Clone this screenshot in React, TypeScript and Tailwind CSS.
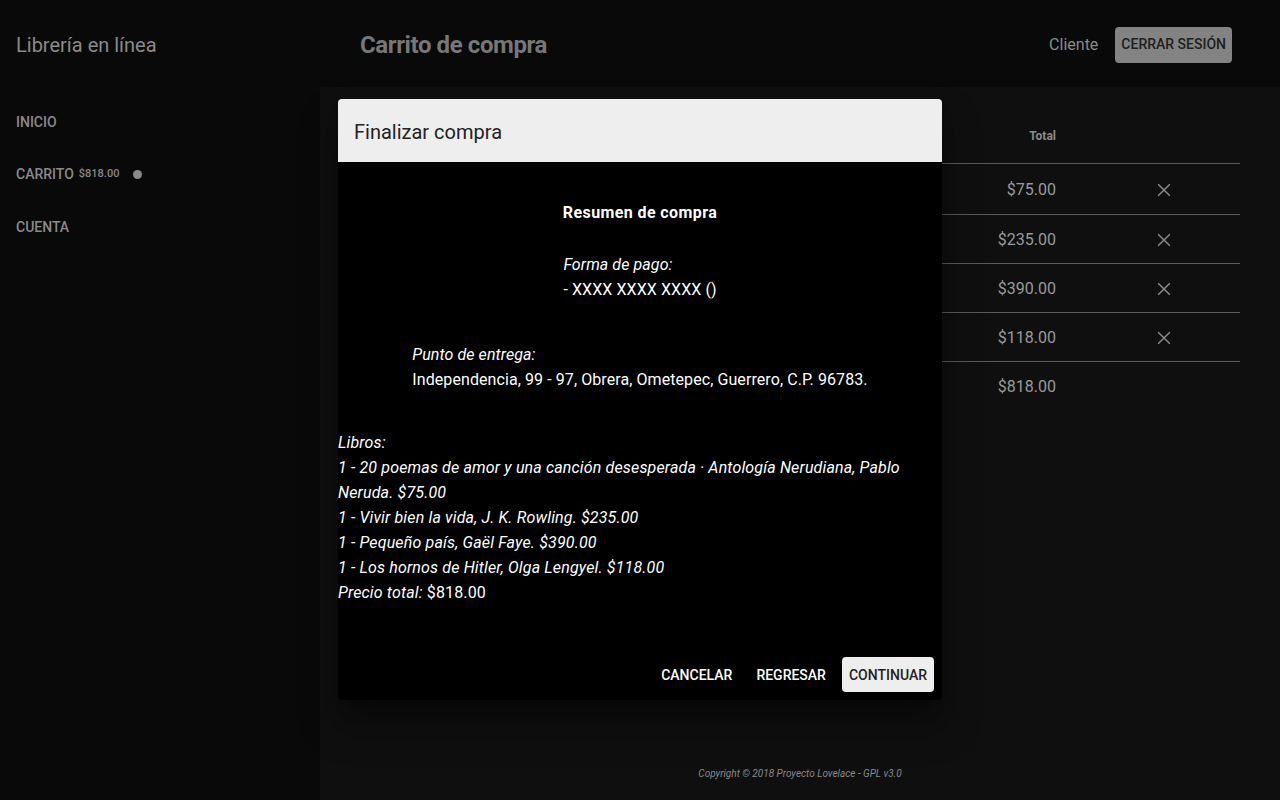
import React from 'react';

const rows = [
  { id: 1, total: '$75.00', h: 'h-[51px]' },
  { id: 2, total: '$235.00', h: 'h-[49px]' },
  { id: 3, total: '$390.00', h: 'h-[49px]' },
  { id: 4, total: '$118.00', h: 'h-[49px]' },
];

const books = [
  '1 - 20 poemas de amor y una canción desesperada · Antología Nerudiana, Pablo Neruda. $75.00',
  '1 - Vivir bien la vida, J. K. Rowling. $235.00',
  '1 - Pequeño país, Gaël Faye. $390.00',
  '1 - Los hornos de Hitler, Olga Lengyel. $118.00',
];

const CloseIcon = () => (
  <svg width="20" height="20" viewBox="0 0 24 24" fill="none" stroke="#8a8a8a" strokeWidth="1.8">
    <path d="M5 5 L19 19 M19 5 L5 19" />
  </svg>
);

const App: React.FC = () => {
  return (
    <div className="relative h-[800px] w-[1280px] overflow-hidden bg-[#0f0f0f] font-['Roboto',sans-serif]">
      <header className="flex h-[87px] items-center bg-[#090909] pt-[2px]">
        <div className="w-[320px] pl-4 text-[20px] text-[#8a8a8a]">Librería en línea</div>
        <h1 className="flex-1 pl-10 text-[24px] font-bold tracking-[-0.4px] text-[#777777]">Carrito de compra</h1>
        <span className="mr-[17px] text-[16px] text-[#8a8a8a]">Cliente</span>
        <button className="mr-12 h-9 rounded bg-[#838383] px-[6px] text-[14px] font-medium uppercase text-[#1e1e1e]">
          Cerrar sesión
        </button>
      </header>

      <div className="flex h-[713px]">
        <nav className="w-[320px] bg-[#090909] pt-[9px] text-[14px] font-medium text-[#8a8a8a]">
          <div className="flex h-[52px] items-center pl-4">INICIO</div>
          <div className="flex h-[52px] items-center pl-4">
            CARRITO
            <span className="ml-[5px] text-[11px]">$818.00</span>
            <span className="ml-[14px] h-[9px] w-[9px] rounded-full bg-[#8a8a8a]" />
          </div>
          <div className="flex h-[53px] items-center pl-4 pt-[1px]">CUENTA</div>
        </nav>

        <main className="flex flex-1 flex-col px-10 pt-5">
          <div className="text-[#9a9a9a]">
            <div className="flex h-[57px] items-center border-b border-[#5a5a5a] pt-[2px] text-[12px] font-bold text-[#8a8a8a]">
              <div className="flex-1" />
              <div className="w-[120px] text-right">Total</div>
              <div className="w-[184px]" />
            </div>
            {rows.map((r) => (
              <div key={r.id} className={`flex ${r.h} items-center border-b border-[#5a5a5a] pt-[2px] text-[16px]`}>
                <div className="flex-1" />
                <div className="w-[120px] text-right">{r.total}</div>
                <div className="flex w-[184px] pl-[98px]">
                  <CloseIcon />
                </div>
              </div>
            ))}
            <div className="flex h-[49px] items-center text-[16px]">
              <div className="flex-1" />
              <div className="w-[120px] text-right">$818.00</div>
              <div className="w-[184px]" />
            </div>
          </div>
          <div className="flex-1" />
          <footer className="pb-[19px] text-center text-[10px] italic text-[#8a8a8a]">
            Copyright © 2018 Proyecto Lovelace - GPL v3.0
          </footer>
        </main>
      </div>

      <div className="absolute left-[338px] top-[99px] flex h-[601px] w-[604px] flex-col rounded bg-black shadow-[0_11px_15px_-7px_rgba(0,0,0,0.4),0_24px_38px_3px_rgba(0,0,0,0.3)]">
        <div className="flex h-[63px] items-center rounded-t bg-[#eeeeee] px-4 pt-[2px] text-[20px] text-[#222222]">
          Finalizar compra
        </div>
        <div className="text-[16px] leading-[25px] text-white">
          <p className="mt-[38px] text-center font-bold tracking-[0.4px]">Resumen de compra</p>
          <div className="mt-[27px] text-center">
            <div className="inline-block text-left tracking-[0.08px]">
              <p className="italic">Forma de pago:</p>
              <p>- XXXX XXXX XXXX ()</p>
            </div>
          </div>
          <div className="mt-[40px] text-center">
            <div className="inline-block text-left tracking-[0.08px]">
              <p className="italic">Punto de entrega:</p>
              <p>Independencia, 99 - 97, Obrera, Ometepec, Guerrero, C.P. 96783.</p>
            </div>
          </div>
          <div className="mt-[38px] tracking-[0.15px]">
            <p className="italic">Libros:</p>
            {books.map((b) => (
              <p key={b} className="italic">{b}</p>
            ))}
            <p>
              <span className="italic">Precio total:</span> $818.00
            </p>
          </div>
        </div>
        <div className="flex-1" />
        <div className="flex justify-end gap-2 p-2">
          <button className="h-[35px] rounded px-2 pt-[2px] text-[14px] font-medium uppercase text-white">Cancelar</button>
          <button className="h-[35px] rounded px-2 pt-[2px] text-[14px] font-medium uppercase text-white">Regresar</button>
          <button className="h-[35px] rounded bg-[#eeeeee] px-[7px] pt-[2px] text-[14px] font-medium uppercase text-[#222222]">
            Continuar
          </button>
        </div>
      </div>
    </div>
  );
};

export default App;
